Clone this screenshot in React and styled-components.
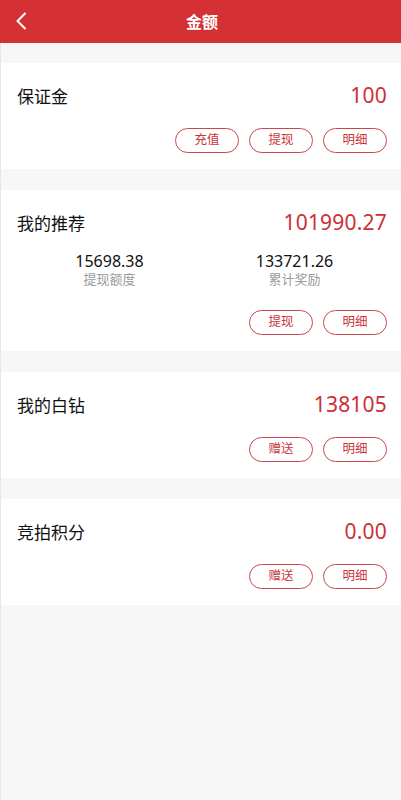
import React from 'react';
import styled, { createGlobalStyle } from 'styled-components';

const GlobalStyle = createGlobalStyle`
  html, body {
    margin: 0;
    padding: 0;
    background: #f7f7f7;
  }
  body {
    font-family: "Noto Sans", "Noto Sans CJK SC", sans-serif;
  }
  * {
    box-sizing: border-box;
  }
`;

const Page = styled.div`
  display: flex;
  flex-direction: column;
  min-height: 100vh;
  background: #f7f7f7;
`;

const Header = styled.header`
  position: relative;
  display: flex;
  align-items: center;
  justify-content: center;
  height: 43px;
  background-color: #d53033;
  color: #fff;
`;

const BackButton = styled.button`
  position: absolute;
  left: 10px;
  top: 9px;
  display: flex;
  align-items: center;
  justify-content: center;
  width: 22px;
  height: 24px;
  padding: 0;
  border: none;
  background: none;
  cursor: pointer;
`;

const Title = styled.h1`
  margin: 0 0 0 3px;
  font-size: 16px;
  font-weight: 700;
  line-height: 1;
`;

const Content = styled.main`
  flex: 1;
  display: flex;
  flex-direction: column;
  gap: 21px;
  padding-top: 20px;
  border-left: 1px solid #e6e6e6;
`;

const Card = styled.section`
  display: flex;
  flex-direction: column;
  padding: 12px 14px 16px 16px;
  background: #fff;
`;

const TopRow = styled.div`
  display: flex;
  align-items: center;
  justify-content: space-between;
  height: 40px;
`;

const Label = styled.span`
  font-size: 17px;
  color: #111;
`;

const Amount = styled.span`
  font-size: 21px;
  color: #cc2f37;
  letter-spacing: 0.2px;
`;

const Stats = styled.div`
  display: grid;
  grid-template-columns: 1fr 1fr;
  margin-top: 9px;
`;

const Stat = styled.div`
  display: flex;
  flex-direction: column;
  align-items: center;
`;

const StatValue = styled.span`
  font-size: 16px;
  line-height: 20px;
  color: #111;
`;

const StatLabel = styled.span`
  font-size: 13px;
  line-height: 16px;
  color: #9a9a9a;
`;

const Actions = styled.div`
  display: flex;
  justify-content: flex-end;
  gap: 10px;
  margin-top: ${props => props.spaced ? '23px' : '13px'};
`;

const ActionButton = styled.button`
  width: 64px;
  height: 25px;
  padding: 0;
  border: 1px solid #c9474c;
  border-radius: 13px;
  background: #fff;
  color: #c9353b;
  font-family: inherit;
  font-size: 12.5px;
  line-height: 1;
  cursor: pointer;
`;

const BackIcon = () => (
  <svg width="12" height="18" viewBox="0 0 12 18" fill="none">
    <path d="M10 1.5 L2.5 9 L10 16.5" stroke="#fff" strokeWidth="2" strokeLinecap="round" strokeLinejoin="round" />
  </svg>
);

const accounts = [
  { label: '保证金', amount: '100', actions: ['充值', '提现', '明细'] },
  {
    label: '我的推荐',
    amount: '101990.27',
    stats: [
      { value: '15698.38', label: '提现额度' },
      { value: '133721.26', label: '累计奖励' },
    ],
    actions: ['提现', '明细'],
  },
  { label: '我的白钻', amount: '138105', actions: ['赠送', '明细'] },
  { label: '竞拍积分', amount: '0.00', actions: ['赠送', '明细'] },
];

export default function App() {
  return (
    <>
      <GlobalStyle />
      <Page>
        <Header>
          <BackButton aria-label="返回">
            <BackIcon />
          </BackButton>
          <Title>金额</Title>
        </Header>
        <Content>
          {accounts.map(a => (
            <Card key={a.label}>
              <TopRow>
                <Label>{a.label}</Label>
                <Amount>{a.amount}</Amount>
              </TopRow>
              {a.stats && (
                <Stats>
                  {a.stats.map(s => (
                    <Stat key={s.label}>
                      <StatValue>{s.value}</StatValue>
                      <StatLabel>{s.label}</StatLabel>
                    </Stat>
                  ))}
                </Stats>
              )}
              <Actions spaced={!!a.stats}>
                {a.actions.map(t => (
                  <ActionButton key={t}>{t}</ActionButton>
                ))}
              </Actions>
            </Card>
          ))}
        </Content>
      </Page>
    </>
  );
}
